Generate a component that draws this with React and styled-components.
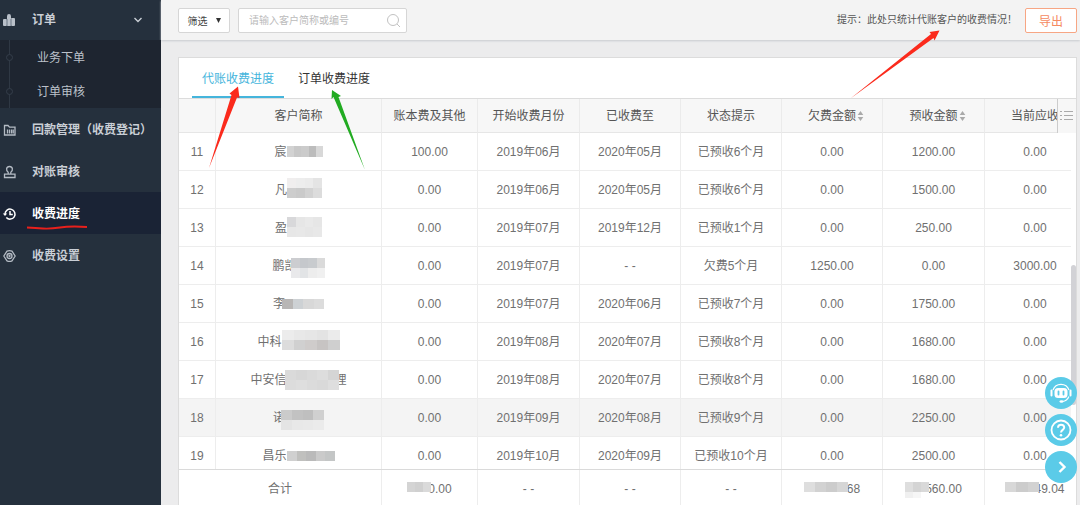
import React from 'react';
import styled, { createGlobalStyle } from 'styled-components';

const GlobalStyle = createGlobalStyle`
  *, *::before, *::after { box-sizing: border-box; }
  body {
    margin: 0;
    overflow: hidden;
    background: #ececed;
    color: #666;
    font: 12px/16px "Liberation Sans", "Noto Sans CJK SC", sans-serif;
  }
  button, input { font-family: inherit; }
  ul { list-style: none; margin: 0; padding: 0; }
`;

const Page = styled.div`
  position: relative;
  display: flex;
  height: 100vh;
  overflow: hidden;
`;

/* ---------- sidebar ---------- */

const Sidebar = styled.nav`
  flex: 0 0 161px;
  min-width: 0;
  background: #25303d;
`;

const NavItem = styled.a`
  display: flex;
  align-items: center;
  height: ${p => (p.$head ? 40 : 42)}px;
  padding: ${p => (p.$head ? 0 : 2)}px 18px 0 2px;
  gap: 15px;
  color: ${p => (p.$active ? '#fff' : '#c9ced5')};
  background: ${p => (p.$active ? '#1a2335' : 'transparent')};
  font-weight: bold;
  text-decoration: none;
  white-space: nowrap;
  svg { flex: none; }
  span { flex: 1; min-width: 0; }
`;

const SubMenu = styled.ul`
  position: relative;
  background: #1e2530;
  &::before {
    content: "";
    position: absolute;
    left: 9px;
    top: 0;
    bottom: 0;
    width: 1px;
    background: #2f3844;
  }
`;

const SubItem = styled.a`
  position: relative;
  display: flex;
  align-items: center;
  height: 34px;
  padding: 2px 0 0 37px;
  color: #bcc2ca;
  text-decoration: none;
  &::before {
    content: "";
    position: absolute;
    left: 6px;
    top: 14px;
    width: 7px;
    height: 7px;
    border: 1px solid #353e4b;
    border-radius: 50%;
    background: #1e2530;
  }
`;

/* ---------- main column ---------- */

const Main = styled.main`
  flex: 1;
  min-width: 0;
  display: flex;
  flex-direction: column;
`;

const Toolbar = styled.header`
  display: flex;
  align-items: center;
  flex: none;
  gap: 8px;
  height: 40px;
  padding: 0 3px 0 17px;
  background: #f3f3f3;
  box-shadow: 0 1px 2px #c8cbcf;
`;

const FilterButton = styled.button`
  display: flex;
  align-items: center;
  justify-content: center;
  gap: 8px;
  width: 52px;
  height: 25px;
  padding: 0;
  border: 1px solid #d6d6d6;
  border-radius: 2px;
  background: #fff;
  color: #444;
  font-size: 10px;
`;

const SearchBox = styled.label`
  display: flex;
  align-items: center;
  width: 169px;
  height: 25px;
  padding: 0 5px 0 10px;
  border: 1px solid #d6d6d6;
  border-radius: 2px;
  background: #fff;
  input {
    flex: 1;
    min-width: 0;
    padding: 0;
    border: 0;
    outline: 0;
    background: none;
    font-size: 10px;
  }
  input::placeholder { color: #bbb; }
`;

const Hint = styled.span`
  margin-left: auto;
  color: #555;
  font-size: 10px;
`;

const ExportButton = styled.button`
  width: 52px;
  height: 25px;
  padding: 0;
  border: 1px solid #f7a684;
  border-radius: 2px;
  background: #fff;
  color: #f58a61;
  font-size: 12px;
`;

const Card = styled.section`
  position: relative;
  flex: 1;
  min-height: 0;
  margin: 17px 3px 0 17px;
  border: 1px solid #dcdcdc;
  border-bottom: 0;
  background: #fff;
  overflow: hidden;
`;

const Tabs = styled.div`
  display: flex;
  gap: 4px;
  height: 41px;
  padding: 0 13px;
  border-bottom: 1px solid #dcdcdc;
`;

const Tab = styled.button`
  height: 40px;
  padding: 0 10px;
  border: 0;
  border-bottom: 2px solid ${p => (p.$active ? '#45b5dc' : 'transparent')};
  background: none;
  color: ${p => (p.$active ? '#45b5dc' : '#333')};
  font-size: 12px;
`;

/* ---------- table ---------- */

const HeadArea = styled.div`
  position: relative;
  overflow: hidden;
`;

const BodyArea = styled.div`
  position: relative;
  max-height: calc(100vh - 169px);
  overflow: hidden;
`;

const BodyRows = styled.div`
  margin-right: 5px;
  overflow: hidden;
`;

const FootArea = styled.div`
  border-top: 1px solid #dadada;
  overflow: hidden;
`;

const Grid = styled.table`
  width: 100%;
  min-width: 907px;
  table-layout: fixed;
  border-collapse: separate;
  border-spacing: 0;
`;

const HeadCell = styled.th`
  height: 34px;
  padding: 0 0 0 ${p => (p.$sorted ? 8 : 0)}px;
  border-right: 1px solid #ebebeb;
  border-bottom: 1px solid #e6e6e6;
  background: #f7f7f7;
  color: #555;
  font-weight: normal;
  white-space: nowrap;
`;

const Cell = styled.td`
  height: 38px;
  padding: 0;
  border-right: 1px solid #ededed;
  border-bottom: 1px solid #ededed;
  background: ${p => (p.$hover ? '#f4f4f4' : '#fff')};
  color: #707070;
  text-align: center;
  white-space: nowrap;
`;

const Masked = styled.div`
  display: flex;
  align-items: center;
  justify-content: center;
  height: 24px;
  svg {
    flex: none;
    margin-left: ${p => -(p.$over || 0)}px;
    margin-right: ${p => -(p.$overEnd || 0)}px;
    z-index: 1;
  }
`;

const SortMark = styled.svg`
  margin-left: 1px;
  vertical-align: -2px;
`;

const ColumnsButton = styled.button`
  position: absolute;
  top: 0;
  right: 0;
  display: flex;
  align-items: center;
  justify-content: center;
  width: 19px;
  height: 34px;
  padding: 0;
  border: 0;
  border-left: 1px solid #ccc;
  background: #f7f7f7;
`;

const Thumb = styled.div`
  position: absolute;
  top: 132px;
  right: 0;
  width: 5px;
  height: 140px;
  border-radius: 3px;
  background: #d2d2d6;
`;

const FloatStack = styled.div`
  position: absolute;
  right: 3px;
  bottom: 22px;
  display: flex;
  flex-direction: column;
  gap: 5px;
`;

const FloatButton = styled.button`
  display: flex;
  align-items: center;
  justify-content: center;
  width: 32px;
  height: 32px;
  padding: 0;
  border: 0;
  border-radius: 50%;
  background: #5bcbe8;
`;

const Marks = styled.svg`
  position: absolute;
  left: 0;
  top: 0;
  pointer-events: none;
`;

/* ---------- icons ---------- */

const OrderIcon = () => (
  <svg width="15" height="14" viewBox="0 0 15 14" fill="#b9c0c9">
    <rect x="1" y="6" width="4" height="7" rx="1" />
    <path d="M5 3.200Q5 1 7 1t2 2.200V13H5z" />
    <rect x="9" y="5" width="4" height="8" rx="1" />
    <path d="M5 6v7M9 6v7" stroke="#6b7684" />
  </svg>
);

const FolderIcon = () => (
  <svg width="15" height="14" viewBox="0 0 15 14" fill="none" stroke="#b4bbc4" strokeWidth="1.300">
    <path d="M2.500 12V2.500h3.500l1.500 1.700h5.500V12z" />
    <path d="M5.500 6.500v4M7.500 6.500v4M9.500 6.500v4M11.200 6.500v4" />
  </svg>
);

const StampIcon = () => (
  <svg width="15" height="14" viewBox="0 0 15 14" fill="none" stroke="#b4bbc4" strokeWidth="1.300">
    <path d="M6.200 9V7.300C3.600 5.500 4.200 1.500 7.500 1.500s3.900 4 1.300 5.800V9M2.500 9.200h10.500v3.300H2.500z" />
  </svg>
);

const HistoryIcon = () => (
  <svg width="15" height="14" viewBox="0 0 15 14" fill="none" stroke="#fff" strokeWidth="1.500">
    <path d="M3 7a5 5 0 1 1 1.300 3.500" />
    <path d="M8 4v3.500h2.800" />
    <path d="M.8 6.500h4.400L3 9z" fill="#fff" stroke="none" />
  </svg>
);

const GearIcon = () => (
  <svg width="15" height="14" viewBox="0 0 15 14" fill="none" stroke="#b4bbc4" strokeWidth="1.300">
    <path d="M5 2.200Q7.500 1 10 2.200l3.200 4.800L10 11.800Q7.500 13 5 11.800L1.800 7z" strokeLinejoin="round" />
    <circle cx="7.500" cy="7" r="2.500" />
    <circle cx="7.500" cy="7" r=".5" />
  </svg>
);

const ChevronDown = () => (
  <svg width="10" height="8" viewBox="0 0 10 8" fill="none" stroke="#c9ced5" strokeWidth="1.400">
    <path d="M1.500 2 5 5.500 8.500 2" />
  </svg>
);

const Sort = () => (
  <SortMark width="7" height="12" viewBox="0 0 7 12" fill="#aaa">
    <path d="M3.500 1 6.300 5H.7zM3.500 11 .7 7h5.600z" />
  </SortMark>
);

/* Pixelated cover: each row is [top, height, colours], measured from the middle line. */
const Mosaic = ({ width, rows }) => (
  <svg width={width} height="24" viewBox={`0 -12 ${width} 24`} shapeRendering="crispEdges">
    {rows.map(([top, h, colors], r) => {
      const step = width / colors.length;
      return colors.map((c, i) => (
        <rect key={`${r}-${i}`} x={Math.round(i * step)} y={top} width={Math.ceil(step)} height={h} fill={c} />
      ));
    })}
  </svg>
);

/* ---------- data ---------- */

const COLS = [37, null, 96, 102, 101, 101, 101, 102, 101];
const HEADS = ['', '客户简称', '账本费及其他', '开始收费月份', '已收费至', '状态提示', '欠费金额', '预收金额', '当前应收'];
const SORTED = [6, 7];

const ROWS = [
  { no: 11, name: '宸', w: 36, m: [[-6, 11, ['#d2d2d2', '#c8c8c8', '#cbcbcb', '#bcbcbc', '#d8d8d8']]],
    v: ['100.00', '2019年06月', '2020年05月', '已预收6个月', '0.00', '1200.00', '0.00'] },
  { no: 12, name: '凡', w: 35, m: [[-12, 10, ['#f0eeee', '#ededed', '#ebebeb', '#e4e4e4']], [-2, 10, ['#cdcdcd', '#cacaca', '#d2d2d2', '#dcdcdc']]],
    v: ['0.00', '2019年06月', '2020年05月', '已预收6个月', '0.00', '1500.00', '0.00'] },
  { no: 13, name: '盈', w: 35, m: [[-11, 10, ['#d8d8da', '#e6e6e6', '#e9e9e9', '#e6e6e6']], [-1, 10, ['#e7e7e7', '#e8e8e8', '#e6e6e6', '#e8e8e8']]],
    v: ['0.00', '2019年07月', '2019年12月', '已预收1个月', '0.00', '250.00', '0.00'] },
  { no: 14, name: '鹏凯', over: 6, w: 34, m: [[-8, 10, ['#cccdd0', '#c5c8cc', '#c8cbce', '#dadada']], [2, 10, ['#e9e9eb', '#e2e4e6', '#ededed', '#f0f0f0']]],
    v: ['0.00', '2019年07月', '- -', '欠费5个月', '1250.00', '0.00', '3000.00'] },
  { no: 15, name: '李', over: 3, w: 42, m: [[-5, 10, ['#b8b6b5', '#cdd1d4', '#d8d8d8', '#dcdcdc']]],
    v: ['0.00', '2019年07月', '2020年06月', '已预收7个月', '0.00', '1750.00', '0.00'] },
  { no: 16, name: '中科', w: 58, m: [[-12, 10, ['#ececec', '#e8e8e8', '#e6e6e6', '#e3e3e3', '#ebebeb']], [-2, 10, ['#dcdcdc', '#d0d0d0', '#cfcccb', '#c7c4c3', '#cfcfcf']]],
    v: ['0.00', '2019年08月', '2020年07月', '已预收8个月', '0.00', '1680.00', '0.00'] },
  { no: 17, name: '中安信', over: 2, end: '理', overEnd: 4, w: 54, m: [[-10, 10, ['#dadada', '#d7d7d7', '#dadada', '#dddddd', '#d5d5d5']], [0, 10, ['#dcdcdc', '#dedede', '#dbdbdb', '#d9d9d9', '#dedede']]],
    v: ['0.00', '2019年08月', '2020年07月', '已预收8个月', '0.00', '1680.00', '0.00'] },
  { no: 18, name: '诺', over: 4, w: 43, hover: true, m: [[-8, 10, ['#cbcbcb', '#c2c2c2', '#bfbfbf', '#d0d0d0']], [2, 10, ['#e4e4e4', '#e8e8e8', '#e9e9e9', '#ebebeb']]],
    v: ['0.00', '2019年09月', '2020年08月', '已预收9个月', '0.00', '2250.00', '0.00'] },
  { no: 19, name: '昌乐', w: 48, m: [[-5, 10, ['#d0d0d0', '#c0c0be', '#bababa', '#cacaca', '#c4c6c6']]],
    v: ['0.00', '2019年10月', '2020年09月', '已预收10个月', '0.00', '2500.00', '0.00'] },
];

const TOTALS = [
  { w: 24, m: [[-7, 10, ['#d4d4d4', '#d0d0d0', '#dadada']]], over: 3, end: '0.00' },
  { end: '- -' },
  { end: '- -' },
  { end: '- -' },
  { w: 44, m: [[-7, 10, ['#dedede', '#d2d2d2', '#cccccc', '#d6d6d6']]], over: 1, end: '68' },
  { w: 24, m: [[-7, 10, ['#dedede', '#d4d4d4', '#d9d9d9']], [3, 6, ['#f0f0f0', '#f6f6f6', '#ffffff']]], over: 4, end: '560.00' },
  { w: 34, m: [[-7, 10, ['#d8d8d8', '#cccccc', '#d2d2d2']]], over: 5, end: '49.04' },
];

const Columns = () => (
  <colgroup>
    {COLS.map((w, i) => <col key={i} style={w ? { width: w } : undefined} />)}
  </colgroup>
);

export default function App() {
  return (
    <>
      <GlobalStyle />
      <Page>
        <Sidebar>
          <NavItem href="#order" $head><OrderIcon /><span>订单</span><ChevronDown /></NavItem>
          <SubMenu>
            <li><SubItem href="#place">业务下单</SubItem></li>
            <li><SubItem href="#review">订单审核</SubItem></li>
          </SubMenu>
          <NavItem href="#payment"><FolderIcon /><span>回款管理（收费登记）</span></NavItem>
          <NavItem href="#check"><StampIcon /><span>对账审核</span></NavItem>
          <NavItem href="#progress" $active><HistoryIcon /><span>收费进度</span></NavItem>
          <NavItem href="#settings"><GearIcon /><span>收费设置</span></NavItem>
        </Sidebar>

        <Main>
          <Toolbar>
            <FilterButton type="button">
              筛选
              <svg width="5" height="5" viewBox="0 0 5 5" fill="#333"><path d="M0 0h5L2.500 5z" /></svg>
            </FilterButton>
            <SearchBox>
              <input type="text" aria-label="搜索客户" placeholder="请输入客户简称或编号" />
              <svg width="15" height="15" viewBox="0 0 15 15" fill="none" stroke="#c2c2c2">
                <circle cx="7" cy="7" r="5.500" />
                <path d="m11 11 3 3" />
              </svg>
            </SearchBox>
            <Hint>提示：此处只统计代账客户的收费情况！</Hint>
            <ExportButton type="button">导出</ExportButton>
          </Toolbar>

          <Card>
            <Tabs>
              <Tab type="button" $active>代账收费进度</Tab>
              <Tab type="button">订单收费进度</Tab>
            </Tabs>

            <HeadArea>
              <Grid>
                <Columns />
                <thead>
                  <tr>
                    {HEADS.map((h, i) => (
                      <HeadCell key={i} $sorted={SORTED.includes(i)}>
                        {h}{SORTED.includes(i) && <Sort />}
                      </HeadCell>
                    ))}
                  </tr>
                </thead>
              </Grid>
              <ColumnsButton type="button" aria-label="列设置">
                <svg width="14" height="12" viewBox="0 0 14 12" stroke="#aaa" shapeRendering="crispEdges">
                  <path d="M0 1.500h2M4 1.500h9M0 5.500h2M4 5.500h9M0 9.500h2M4 9.500h9" />
                </svg>
              </ColumnsButton>
            </HeadArea>

            <BodyArea>
              <BodyRows>
                <Grid>
                  <Columns />
                  <tbody>
                    {ROWS.map(r => (
                      <tr key={r.no}>
                        <Cell $hover={r.hover}>{r.no}</Cell>
                        <Cell $hover={r.hover}>
                          <Masked $over={r.over} $overEnd={r.overEnd}>
                            {r.name}<Mosaic width={r.w} rows={r.m} />{r.end}
                          </Masked>
                        </Cell>
                        {r.v.map((v, i) => <Cell key={i} $hover={r.hover}>{v}</Cell>)}
                      </tr>
                    ))}
                  </tbody>
                </Grid>
              </BodyRows>
              <Thumb />
            </BodyArea>

            <FootArea>
              <Grid>
                <Columns />
                <tbody>
                  <tr>
                    <Cell colSpan={2}>合计</Cell>
                    {TOTALS.map((t, i) => (
                      <Cell key={i}>
                        <Masked $overEnd={t.over}>
                          {t.w && <Mosaic width={t.w} rows={t.m} />}{t.end}
                        </Masked>
                      </Cell>
                    ))}
                  </tr>
                </tbody>
              </Grid>
            </FootArea>
          </Card>
        </Main>

        <FloatStack>
          <FloatButton type="button" aria-label="客服">
            <svg width="22" height="22" viewBox="0 0 22 22" fill="none" stroke="#fff">
              <path d="M3 8a8.500 8.500 0 0 1 16 0" strokeWidth="1.200" />
              <path d="M1.500 8.500v5M20.500 8.500v5" strokeWidth="2" strokeLinecap="round" />
              <rect x="4.500" y="6" width="13" height="10" rx="3.500" fill="#fff" stroke="none" />
              <path d="M8.500 9.500v3M13.500 9.500v3" stroke="#5bcbe8" strokeWidth="1.800" strokeLinecap="round" />
              <path d="M19 14.500Q17 19 12.500 19.500" strokeWidth="1.200" />
              <ellipse cx="11.500" cy="19.500" rx="2" ry="1.300" fill="#fff" stroke="none" />
            </svg>
          </FloatButton>
          <FloatButton type="button" aria-label="帮助">
            <svg width="22" height="22" viewBox="0 0 22 22" fill="none" stroke="#fff" strokeWidth="2">
              <circle cx="11" cy="11" r="9.500" strokeWidth="1.800" />
              <path d="M8 8.700C8 4.500 14.200 4.800 14.200 8.500c0 2.300-3.200 2.500-3.200 5" />
              <circle cx="11" cy="16.300" r="1.300" fill="#fff" stroke="none" />
            </svg>
          </FloatButton>
          <FloatButton type="button" aria-label="展开">
            <svg width="22" height="22" viewBox="0 0 22 22" fill="none" stroke="#fff" strokeWidth="2.400">
              <path d="m9.500 6 5 5-5 5" />
            </svg>
          </FloatButton>
        </FloatStack>

        <Marks width="1080" height="240" viewBox="0 0 1080 240" aria-hidden="true">
          <path d="M209 168 231.500 95 229.500 93.500 238 86.500 239.500 98 237 97.500z" fill="#fb2a1c" />
          <path d="M365 170 333.500 97 331.500 99 332 90 341 96 338.500 97z" fill="#22ab22" />
          <path d="M850.500 98.500 931 34 929.500 32 939.500 30.500 934.500 40.500 933.500 38z" fill="#fb2a1c" />
          <path d="M27 227.500Q36 228 43 228.500T60 227.500 87 227" fill="none" stroke="#e8201c" strokeWidth="2" />
        </Marks>
      </Page>
    </>
  );
}
